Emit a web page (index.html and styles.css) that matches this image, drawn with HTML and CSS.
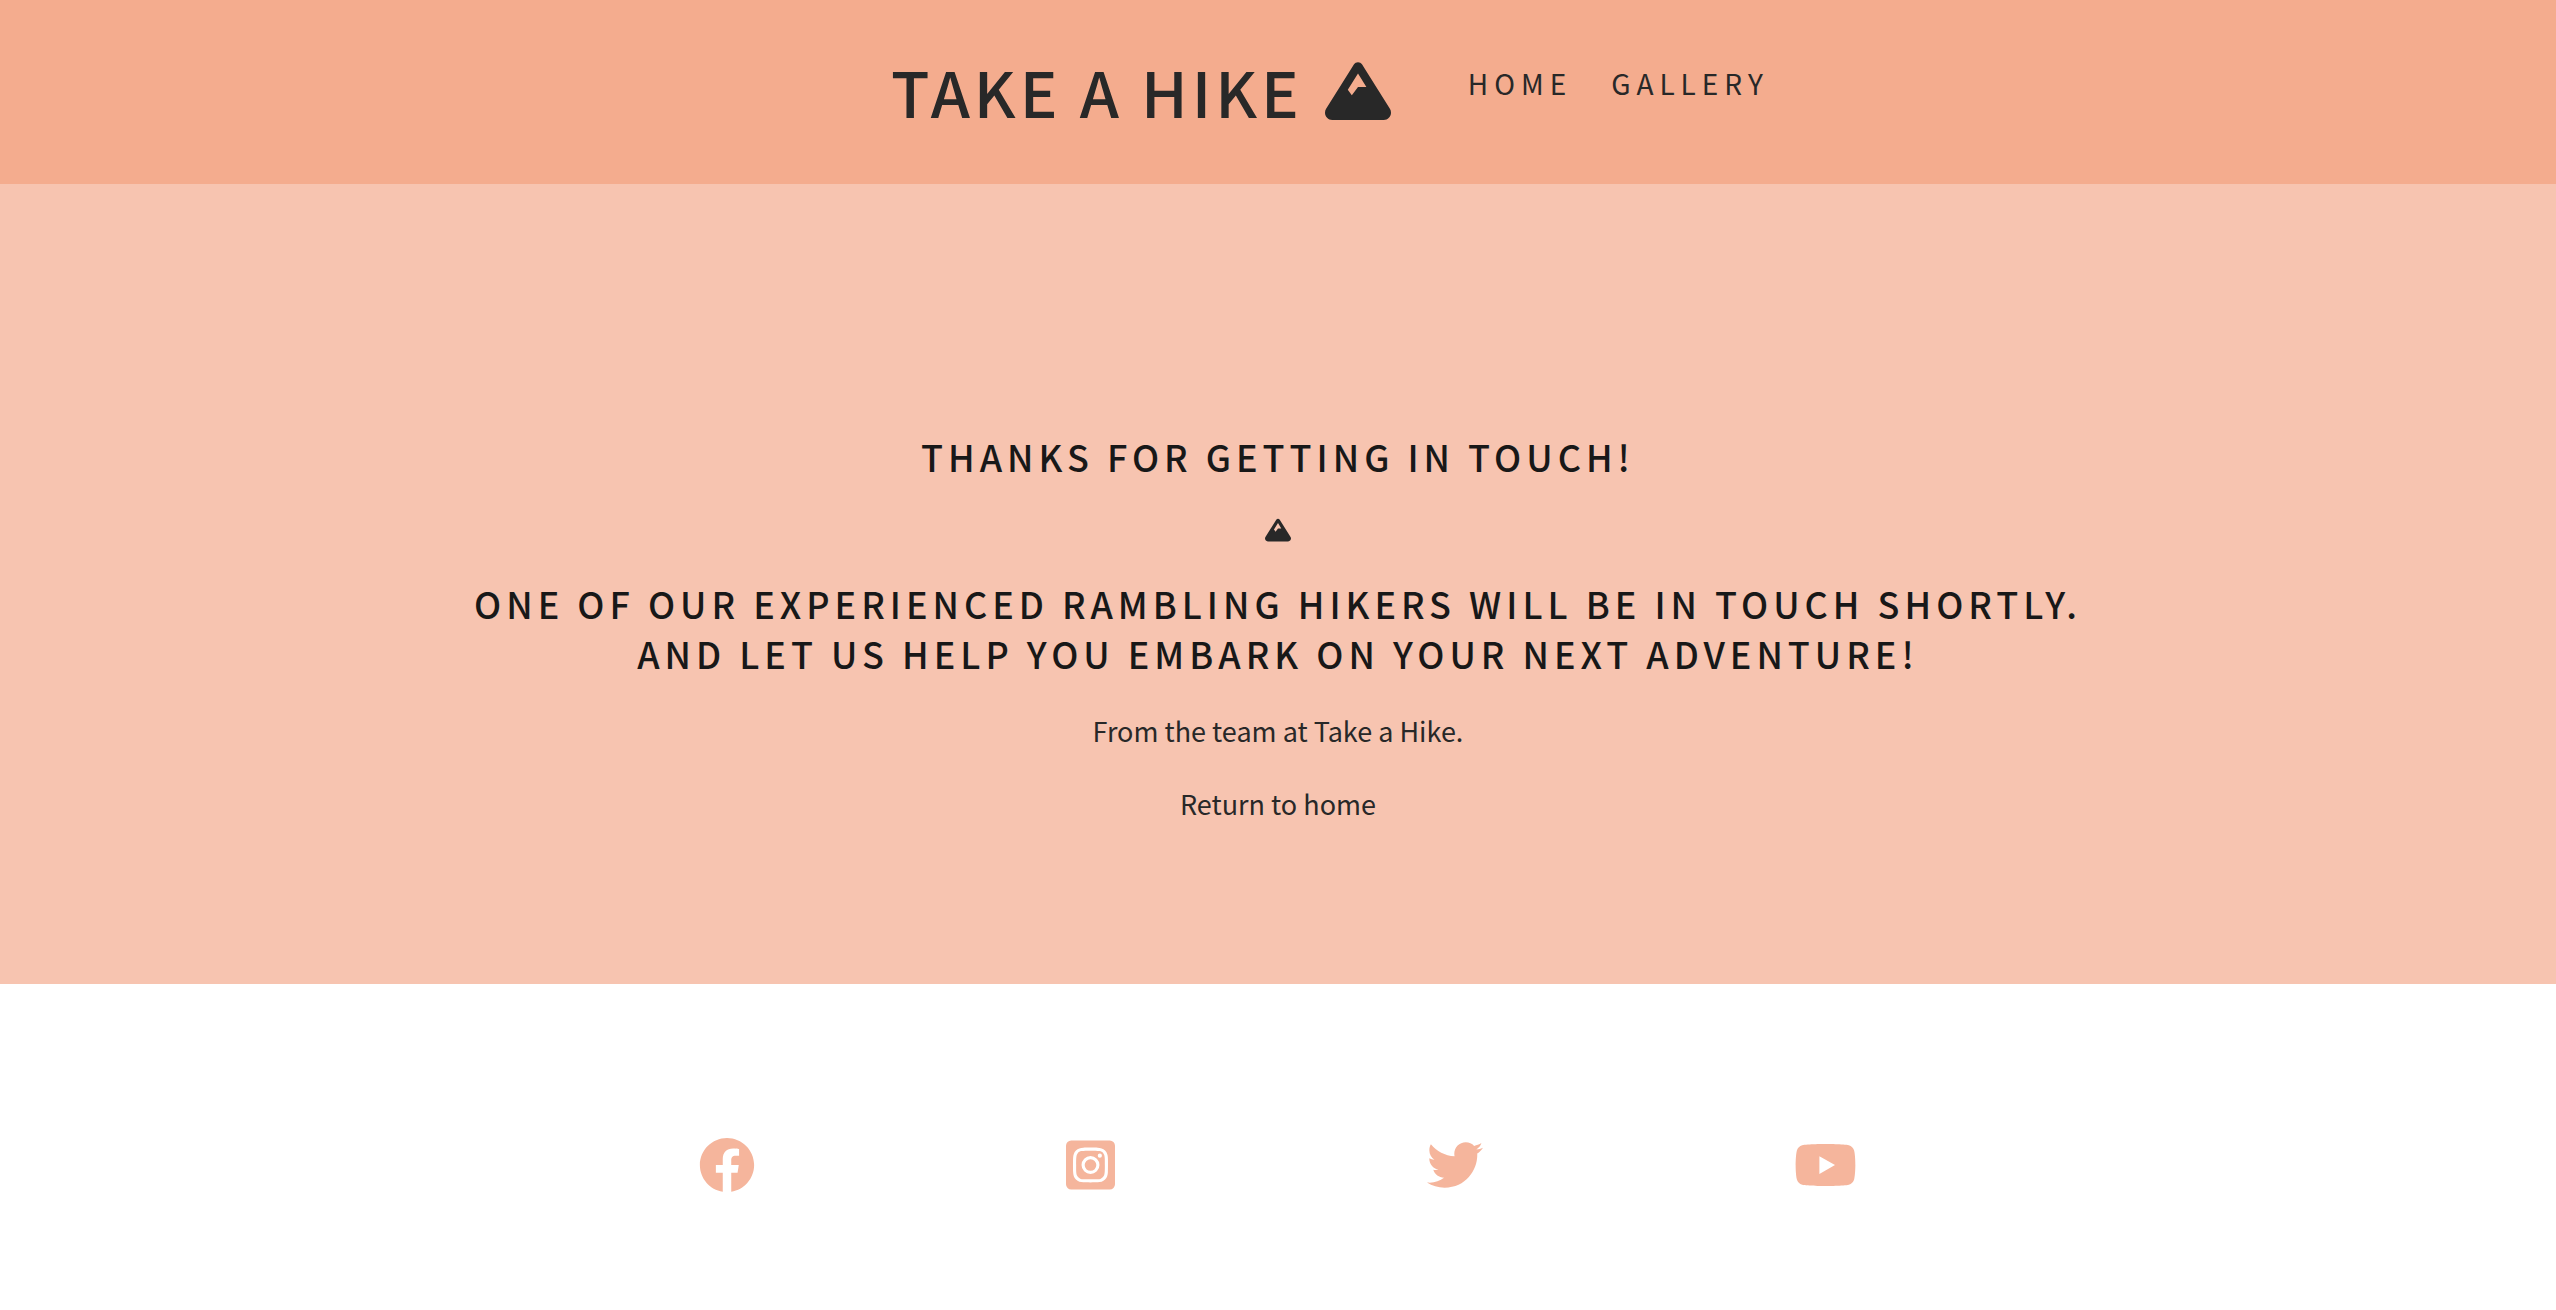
FILE: index.html
```html
<!DOCTYPE html>
<html lang="en">
<head>
<meta charset="utf-8">
<meta name="viewport" content="width=device-width, initial-scale=1">
<title>Take a Hike</title>
<link rel="stylesheet" href="styles.css">
</head>
<body>
<svg class="sprite" aria-hidden="true">
  <symbol id="mountain" viewBox="0 0 512 512"><path fill-rule="evenodd" d="M256 32c12.500 0 24.100 6.400 30.800 17L503.400 394.400c5.600 8.900 8.600 19.200 8.600 29.700c0 30.900-25 55.900-55.900 55.900L55.900 480C25 480 0 455 0 424.100c0-10.500 3-20.800 8.600-29.700L225.200 49c6.600-10.600 18.300-17 30.800-17zm65 192L256 120.400 176.900 246.500 208 288l48-64 65 0z"/></symbol>
</svg>
<header class="header">
  <a class="logo" href="#">Take a Hike <svg class="logo-icon" aria-hidden="true"><use href="#mountain"/></svg></a>
  <nav class="nav">
    <a href="#">Home</a>
    <a href="#">Gallery</a>
  </nav>
</header>
<main class="thanks">
  <h1 class="heading">Thanks for getting in touch!</h1>
  <svg class="divider" aria-hidden="true"><use href="#mountain"/></svg>
  <h2 class="heading">One of our experienced rambling hikers will be in touch shortly.<br>And let us help you embark on your next adventure!</h2>
  <p class="text">From the team at Take a Hike.</p>
  <a class="text" href="#">Return to home</a>
</main>
<footer class="footer">
  <a href="#" aria-label="Facebook"><svg class="social" viewBox="0 0 512 512"><path d="M504 256C504 119 393 8 256 8S8 119 8 256c0 123.780 90.690 226.380 209.250 245V327.690h-63V256h63v-54.640c0-62.150 37-96.480 93.670-96.480 27.140 0 55.520 4.840 55.520 4.840v61h-31.280c-30.800 0-40.410 19.120-40.410 38.730V256h68.780l-11 71.690h-57.780V501C413.310 482.380 504 379.780 504 256z"/></svg></a>
  <a href="#" aria-label="Instagram"><svg class="social" viewBox="0 0 448 512"><path d="M224,202.660A53.340,53.340,0,1,0,277.360,256,53.380,53.380,0,0,0,224,202.660Zm124.710-41a54,54,0,0,0-30.410-30.410c-21-8.290-71-6.430-94.300-6.430s-73.250-1.930-94.310,6.430a54,54,0,0,0-30.410,30.410c-8.280,21-6.430,71.050-6.430,94.330S91,329.260,99.320,350.330a54,54,0,0,0,30.410,30.410c21,8.290,71,6.430,94.310,6.430s73.240,1.930,94.300-6.430a54,54,0,0,0,30.410-30.410c8.350-21,6.430-71.050,6.430-94.330S357.100,182.740,348.750,161.670ZM224,338a82,82,0,1,1,82-82A81.900,81.900,0,0,1,224,338Zm85.380-148.300a19.140,19.140,0,1,1,19.130-19.140A19.100,19.100,0,0,1,309.420,189.740ZM400,32H48A48,48,0,0,0,0,80V432a48,48,0,0,0,48,48H400a48,48,0,0,0,48-48V80A48,48,0,0,0,400,32ZM382.880,322c-1.290,25.630-7.140,48.340-25.850,67s-41.400,24.630-67,25.850c-26.410,1.490-105.590,1.490-132,0-25.630-1.290-48.260-7.150-67-25.850s-24.630-41.420-25.850-67c-1.490-26.420-1.490-105.610,0-132,1.290-25.630,7.070-48.340,25.850-67s41.470-24.560,67-25.780c26.410-1.490,105.590-1.490,132,0,25.630,1.290,48.330,7.150,67,25.850s24.630,41.420,25.850,67.050C384.370,216.440,384.370,295.560,382.880,322Z"/></svg></a>
  <a href="#" aria-label="Twitter"><svg class="social" viewBox="0 0 512 512"><path d="M459.370 151.716c.325 4.548.325 9.097.325 13.645 0 138.720-105.583 298.558-298.558 298.558-59.452 0-114.680-17.219-161.137-47.106 8.447.974 16.568 1.299 25.340 1.299 49.055 0 94.213-16.568 130.274-44.832-46.132-.975-84.792-31.188-98.112-72.772 6.498.974 12.995 1.624 19.818 1.624 9.421 0 18.843-1.300 27.614-3.573-48.081-9.747-84.143-51.980-84.143-102.985v-1.299c13.969 7.797 30.214 12.670 47.431 13.319-28.264-18.843-46.781-51.005-46.781-87.391 0-19.492 5.197-37.360 14.294-52.954 51.655 63.675 129.300 105.258 216.365 109.807-1.624-7.797-2.599-15.918-2.599-24.040 0-57.828 46.782-104.934 104.934-104.934 30.213 0 57.502 12.670 76.670 33.137 23.715-4.548 46.456-13.320 66.599-25.340-7.798 24.366-24.366 44.833-46.132 57.827 21.117-2.273 41.584-8.122 60.426-16.243-14.292 20.791-32.161 39.308-52.628 54.253z"/></svg></a>
  <a href="#" aria-label="YouTube"><svg class="social" viewBox="0 0 576 512"><path d="M549.655 124.083c-6.281-23.650-24.787-42.276-48.284-48.597C458.781 64 288 64 288 64S117.220 64 74.629 75.486c-23.497 6.322-42.003 24.947-48.284 48.597-11.412 42.867-11.412 132.305-11.412 132.305s0 89.438 11.412 132.305c6.281 23.650 24.787 41.500 48.284 47.821C117.220 448 288 448 288 448s170.780 0 213.371-11.486c23.497-6.321 42.003-24.171 48.284-47.821 11.412-42.867 11.412-132.305 11.412-132.305s0-89.438-11.412-132.305zm-317.510 213.508V175.185l142.739 81.205-142.739 81.201z"/></svg></a>
</footer>
</body>
</html>
```
FILE: styles.css
```css
body {
  margin: 0;
  background: #fff;
  color: #282828;
  font-family: "Noto Sans CJK SC", "Noto Sans", sans-serif;
  font-size: 27px;
  line-height: 40px;
}

a {
  color: inherit;
  text-decoration: none;
}

svg {
  display: block;
  fill: currentColor;
}

.sprite {
  position: absolute;
  width: 0;
  height: 0;
}

.header {
  display: flex;
  justify-content: center;
  align-items: flex-start;
  gap: 77px;
  padding: 47px 0 49px 104px;
  background: #f4ac8e;
}

.logo {
  display: flex;
  align-items: center;
  gap: 22px;
  font-size: 63px;
  font-weight: 500;
  line-height: 88px;
  letter-spacing: 4px;
  text-transform: uppercase;
}

.logo-icon {
  width: 66px;
  height: 66px;
}

.nav {
  display: flex;
  gap: 39px;
  padding-top: 16px;
  font-size: 28px;
  letter-spacing: 6px;
  text-transform: uppercase;
}

.thanks {
  display: flex;
  flex-direction: column;
  align-items: center;
  padding: 247px 24px 160px;
  background: #f7c4b0;
  text-align: center;
}

.heading {
  margin: 0;
  color: #181818;
  font-size: 36px;
  font-weight: 500;
  line-height: 50px;
  letter-spacing: 5px;
  text-transform: uppercase;
}

.divider {
  width: 26px;
  height: 26px;
  margin: 36px 0 35px;
}

.text {
  margin: 33px 0 0;
}

.footer {
  display: flex;
  justify-content: space-around;
  width: 57.5%;
  margin: 0 auto;
  padding: 153px 0 117px;
  color: #f5b59c;
}

.social {
  height: 56px;
}
```
